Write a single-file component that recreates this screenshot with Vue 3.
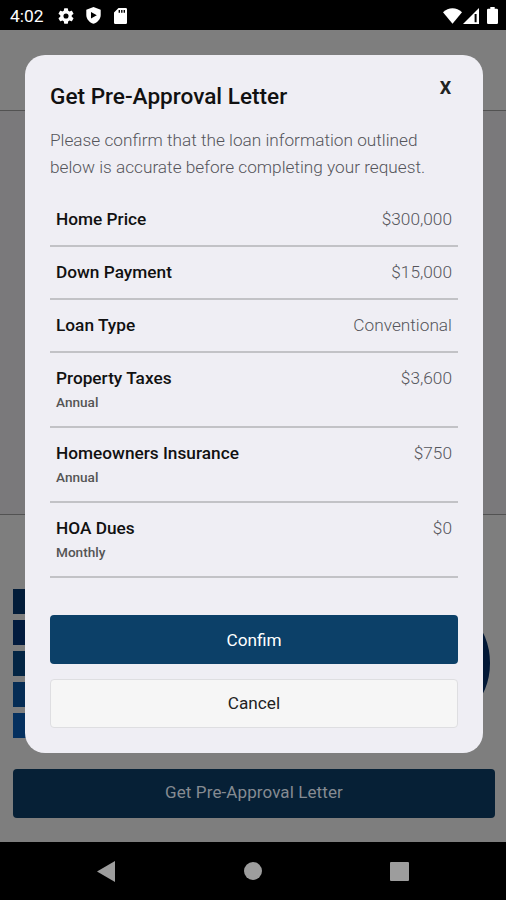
<script setup>
const rows = [
  { label: 'Home Price', value: '$300,000' },
  { label: 'Down Payment', value: '$15,000' },
  { label: 'Loan Type', value: 'Conventional' },
  { label: 'Property Taxes', value: '$3,600', period: 'Annual' },
  { label: 'Homeowners Insurance', value: '$750', period: 'Annual' },
  { label: 'HOA Dues', value: '$0', period: 'Monthly' },
]
const legend = ['#021c39', '#021b3e', '#032544', '#052c55', '#05305f']
</script>

<template>
  <div class="screen">
    <header class="status">
      <span class="clock">4:02</span>
      <svg class="gear" viewBox="2 2 20 20"><path fill="#fff" d="M19.14 12.94c.04-.3.06-.61.06-.94s-.02-.64-.07-.94l2.03-1.58a.49.49 0 0 0 .12-.61l-1.92-3.32a.49.49 0 0 0-.59-.22l-2.39.96a7 7 0 0 0-1.62-.94l-.36-2.54a.48.48 0 0 0-.48-.41h-3.84a.47.47 0 0 0-.47.41l-.36 2.54c-.59.24-1.13.57-1.62.94l-2.39-.96a.48.48 0 0 0-.59.22L2.74 8.87a.47.47 0 0 0 .12.61l2.03 1.58a6 6 0 0 0 0 1.88l-2.03 1.58a.49.49 0 0 0-.12.61l1.92 3.32c.12.22.37.29.59.22l2.39-.96c.5.38 1.03.7 1.62.94l.36 2.54c.05.24.24.41.48.41h3.84c.24 0 .44-.17.47-.41l.36-2.54a7 7 0 0 0 1.62-.94l2.39.96c.22.08.47 0 .59-.22l1.92-3.32a.47.47 0 0 0-.12-.61zM12 15.2a3.2 3.2 0 1 1 0-6.4 3.2 3.2 0 0 1 0 6.4z" /></svg>
      <svg class="shield" viewBox="0 0 15 17"><path fill="#fff" fill-rule="evenodd" d="M7.5 0 L14.7 2.7 V8 C14.7 12 11.7 15.4 7.5 16.8 C3.3 15.4 .3 12 .3 8 V2.7Z M5 5 V11.4 L10.8 8.2Z" /></svg>
      <svg class="card" viewBox="0 0 13 16"><path fill="#fff" fill-rule="evenodd" d="M4.5 0 H11.7 Q13 0 13 1.3 V14.7 Q13 16 11.7 16 H1.3 Q0 16 0 14.7 V4.5Z M4.6 2 V4.7 H6 V2Z M7.1 2 V4.7 H8.5 V2Z M9.6 2 V4.7 H11 V2Z" /></svg>
      <span class="spacer"></span>
      <svg class="wifi" viewBox="0 0 19 16"><path fill="#fff" d="M0 4.2 C5.5 -1 13.5 -1 19 4.2 L9.5 15.8Z" /></svg>
      <svg class="signal" viewBox="0 0 16 16"><path fill="#fff" fill-rule="evenodd" d="M16 0 V16 H0Z M11.6 6 V14.2 H13.6 V6Z" /></svg>
      <svg class="battery" viewBox="0 0 11 17"><path fill="#fff" d="M3.3 0 H7.7 V1.7 H9.8 Q11 1.7 11 2.9 V15.8 Q11 17 9.8 17 H1.2 Q0 17 0 15.8 V2.9 Q0 1.7 1.2 1.7 H3.3Z" /></svg>
    </header>

    <main class="page">
      <div class="topbar"></div>
      <div class="content"></div>
      <section class="summary">
        <div class="chart">
          <div class="legend">
            <span v-for="color in legend" :key="color" class="swatch" :style="{ background: color }"></span>
          </div>
          <div class="donut"></div>
        </div>
        <button class="request">Get Pre-Approval Letter</button>
      </section>

      <div class="overlay">
        <section class="modal">
          <div class="heading">
            <h1>Get Pre-Approval Letter</h1>
            <button class="close">X</button>
          </div>
          <p class="intro">Please confirm that the loan information outlined<br />below is accurate before completing your request.</p>
          <div v-for="row in rows" :key="row.label" class="row" :class="{ tall: row.period }">
            <div class="names">
              <span class="label">{{ row.label }}</span>
              <span v-if="row.period" class="period">{{ row.period }}</span>
            </div>
            <span class="value">{{ row.value }}</span>
          </div>
          <div class="actions">
            <button class="confirm">Confim</button>
            <button class="cancel">Cancel</button>
          </div>
        </section>
      </div>
    </main>

    <nav class="nav">
      <svg class="back" viewBox="0 0 18 21"><path fill="#9d9d9d" d="M18 0 V21 L0 10.5Z" /></svg>
      <span class="home"></span>
      <span class="recent"></span>
    </nav>
  </div>
</template>

<style>
body { margin: 0; background: #000; }
</style>

<style scoped>
.screen { width: 506px; height: 900px; display: flex; flex-direction: column; overflow: hidden; font-family: Roboto, sans-serif; background: #000; }
button { font-family: inherit; padding: 0; border: 0; margin: 0; }
.status { height: 30px; flex: none; display: flex; align-items: center; padding: 1px 8px 0 10px; box-sizing: border-box; color: #fff; }
.clock { width: 48px; font-size: 17.4px; line-height: 30px; }
.gear { width: 16px; height: 16px; }
.shield { width: 15px; height: 17px; margin-left: 12px; }
.card { width: 13px; height: 16px; margin-left: 13px; }
.spacer { flex: 1; }
.wifi { width: 19px; height: 16px; }
.signal { width: 16px; height: 16px; margin-left: 1px; }
.battery { width: 11px; height: 17px; margin-left: 8px; }
.page { position: relative; height: 812px; flex: none; display: flex; flex-direction: column; background: #7e7e7e; }
.topbar { height: 80px; border-bottom: 1px solid #525252; flex: none; }
.content { height: 403px; background: #7a797b; border-bottom: 1px solid #525252; flex: none; }
.summary { padding: 74px 11px 0 13px; }
.chart { display: flex; justify-content: space-between; height: 149px; padding-right: 5px; }
.legend { display: flex; flex-direction: column; gap: 6px; }
.swatch { width: 130px; height: 25px; }
.donut { width: 136px; height: 136px; margin-top: 6px; border-radius: 50%; border: 24px solid #021836; box-sizing: border-box; }
.request { display: block; width: 100%; height: 49px; margin-top: 30.5px; padding-bottom: 2px; border-radius: 4px; background: #062036; color: #858b92; font-size: 17px; letter-spacing: 0.1px; }
.overlay { position: absolute; inset: 0; display: flex; justify-content: center; align-items: flex-start; padding: 25px 23px 0 25px; }
.modal { width: 458px; height: 698px; box-sizing: border-box; border-radius: 20px; background: #efeef4; padding: 24px 25px 0; }
.heading { display: flex; justify-content: space-between; height: 48px; }
h1 { margin: 2px 0 0; font-size: 22.6px; line-height: 32px; font-weight: 500; color: #111; white-space: nowrap; }
.close { width: 25px; height: 18px; background: none; font-size: 18px; line-height: 18px; font-weight: 700; color: #222; }
.intro { margin: 0; height: 67px; font-size: 17.23px; line-height: 27px; font-weight: 300; color: #55555b; white-space: nowrap; }
.row { display: flex; justify-content: space-between; height: 53px; box-sizing: border-box; border-bottom: 2px solid #c2c2c6; padding: 15px 6px 0; font-size: 17.25px; line-height: 20px; }
.tall { height: 75px; }
.names { display: flex; flex-direction: column; gap: 4px; }
.label { font-weight: 500; color: #111; }
.period { font-size: 13.6px; font-weight: 500; color: #555; }
.value { font-weight: 300; color: #55555b; }
.actions { display: flex; flex-direction: column; gap: 15px; padding-top: 37px; }
.actions button { height: 49px; border-radius: 4px; font-size: 17.2px; }
.actions .confirm { background: #0c4068; color: #fff; }
.actions .cancel { background: #f6f6f6; color: #222; border: 1px solid #dedee1; padding-bottom: 1px; }
.nav { height: 58px; flex: none; display: flex; align-items: center; padding: 0 97px; justify-content: space-between; }
.back { width: 18px; height: 21px; }
.home { width: 18px; height: 18px; border-radius: 50%; background: #9d9d9d; }
.recent { width: 19px; height: 19px; border-radius: 1px; background: #9d9d9d; }
</style>
